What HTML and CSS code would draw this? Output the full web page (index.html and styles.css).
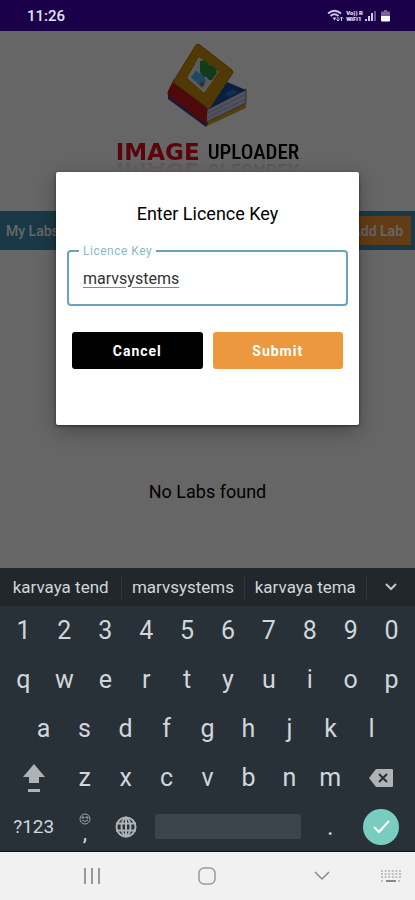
FILE: index.html
```html
<!DOCTYPE html>
<html lang="en">

<head>
    <meta charset="UTF-8">
    <meta name="viewport" content="width=device-width, initial-scale=1">
    <title>Image Uploader</title>
    <link rel="stylesheet" href="styles.css">
</head>

<body>
    <div class="phone">
        <header class="status-bar">
            <span class="clock">11:26</span>
            <div class="status-icons">
                <svg width="17" height="14" viewBox="0 0 17 14">
                    <path d="M1 4.500Q7.500-1 14 4.500M3.500 7Q7.500 3.500 11.500 7" fill="none" stroke="#cfc8e6" stroke-width="1.800" />
                    <path d="M5.500 8.500h4l-2 3z" fill="#cfc8e6" />
                    <path d="M11 8v4M9.500 10.500l1.500 1.500 1.500-1.500M14.500 12V8M13 9.500L14.500 8 16 9.500" fill="none" stroke="#cfc8e6" />
                </svg>
                <span class="volte"><span>Vo)) R</span><span>WiFi1</span></span>
                <svg width="12" height="14" viewBox="0 0 12 14">
                    <path d="M1 12v-2M4 12V7M7 12V4" stroke="#cfc8e6" stroke-width="2" />
                    <path d="M10 12V2" stroke="#67578f" stroke-width="2" />
                </svg>
                <svg class="battery" width="9" height="14" viewBox="0 0 9 14">
                    <path d="M3 1h3v1.500h3V8H0V2.500h3z" fill="#75679c" />
                    <path d="M0 7h9v4.500q0 1-1 1H1q-1 0-1-1z" fill="#fff" />
                </svg>
            </div>
        </header>

        <main class="app">
            <div class="brand">
                <svg class="brand-icon" viewBox="0 0 84 86">
                    <path d="M3 50L41 83 80 65V58L42 71z" fill="#c9a51a" />
                    <path d="M2 49v7l38 28 2-4z" fill="#2f3f9a" />
                    <path d="M40 67L80 46v14L41 79z" fill="#c8cbe8" stroke="#778" />
                    <path d="M40 71L80 51M40 75L80 56" stroke="#a6a9cc" />
                    <path d="M43 66L61 39 80 47z" fill="#144fa8" />
                    <path d="M59 51l8-5 5 3-8 5z" fill="#3070c8" />
                    <path d="M8 36L42 62l-2 20L5 55q-5-3-3-7z" fill="#c41a1a" />
                    <path d="M30 2q2-2 4 0l32 25q2 2 0 4L43 66 7 39z" fill="#c98f12" stroke="#a87500" />
                    <path d="M33 15l19 14-14 20-16-14z" fill="#d5e8f0" stroke="#fff" />
                    <path d="M34 18q6-2 9 4 8 1 8 8l-5 7q-4 1-5-3-6 0-7-6z" fill="#2f9440" />
                    <path d="M25 34l5-6 8 5 2 6-4 6z" fill="#4cb6f5" />
                    <circle cx="36" cy="41" r="2" fill="#f04030" />
                </svg>
                <h1 class="brand-name"><span class="brand-red">IMAGE</span> <span class="brand-black">UPLOADER</span></h1>
            </div>

            <div class="toolbar">
                <span>My Labs</span>
                <button class="add-lab" type="button">Add Lab</button>
            </div>

            <p class="empty">No Labs found</p>

            <!-- Licence dialog -->
            <div class="scrim">
                <form class="dialog" role="dialog" aria-labelledby="dialog-title">
                    <h2 class="dialog-title" id="dialog-title">Enter Licence Key</h2>
                    <fieldset class="field">
                        <legend><label for="licence">Licence Key</label></legend>
                        <input id="licence" type="text" value="marvsystems" spellcheck="false">
                    </fieldset>
                    <div class="actions">
                        <button class="btn btn-cancel" type="button">Cancel</button>
                        <button class="btn btn-submit" type="button">Submit</button>
                    </div>
                </form>
            </div>
        </main>

        <section class="keyboard">
            <div class="suggestions">
                <button type="button">karvaya tend</button>
                <button type="button">marvsystems</button>
                <button type="button">karvaya tema</button>
                <button class="more" type="button" aria-label="More">
                    <svg width="14" height="10" viewBox="0 0 14 10"><path d="M2 2l5 5 5-5" fill="none" stroke="#c3c7c9" stroke-width="2" /></svg>
                </button>
            </div>
            <div class="keys">
                <button type="button">1</button>
                <button type="button">2</button>
                <button type="button">3</button>
                <button type="button">4</button>
                <button type="button">5</button>
                <button type="button">6</button>
                <button type="button">7</button>
                <button type="button">8</button>
                <button type="button">9</button>
                <button type="button">0</button>
            </div>
            <div class="keys">
                <button type="button">q</button>
                <button type="button">w</button>
                <button type="button">e</button>
                <button type="button">r</button>
                <button type="button">t</button>
                <button type="button">y</button>
                <button type="button">u</button>
                <button type="button">i</button>
                <button type="button">o</button>
                <button type="button">p</button>
            </div>
            <div class="keys keys-inset">
                <button type="button">a</button>
                <button type="button">s</button>
                <button type="button">d</button>
                <button type="button">f</button>
                <button type="button">g</button>
                <button type="button">h</button>
                <button type="button">j</button>
                <button type="button">k</button>
                <button type="button">l</button>
            </div>
            <div class="keys">
                <button class="key-wide" type="button" aria-label="Shift">
                    <svg width="24" height="30" viewBox="0 0 24 30"><path d="M12 1l11 13h-6v6H7v-6H1zM6 26h12v3H6z" fill="#adb3b7" /></svg>
                </button>
                <button type="button">z</button>
                <button type="button">x</button>
                <button type="button">c</button>
                <button type="button">v</button>
                <button type="button">b</button>
                <button type="button">n</button>
                <button type="button">m</button>
                <button class="key-wide" type="button" aria-label="Delete">
                    <svg width="26" height="20" viewBox="0 0 26 20">
                        <path d="M8 1h16q1 0 1 1v16q0 1-1 1H8L1 10z" fill="#adb3b7" />
                        <path d="M11 6l8 8M19 6l-8 8" stroke="#283138" stroke-width="2" />
                    </svg>
                </button>
            </div>
            <div class="keys">
                <button class="key-wide key-mode" type="button">?123</button>
                <button class="key-comma" type="button" aria-label="Comma">
                    <svg width="12" height="12" viewBox="0 0 12 12">
                        <circle cx="6" cy="6" r="5" fill="none" stroke="#9ca3a8" />
                        <path d="M3 4h2v1H3zM7 4h2v1H7zM3 7q3 3 6 0" fill="none" stroke="#9ca3a8" />
                    </svg>
                    <span>,</span>
                </button>
                <button type="button" aria-label="Language">
                    <svg width="22" height="22" viewBox="0 0 22 22">
                        <circle cx="11" cy="11" r="9.500" fill="none" stroke="#adb3b7" stroke-width="2" />
                        <path d="M1 7.500h20M1 14.500h20M11 1v20M11 1C5 6 5 16 11 21M11 1c6 5 6 15 0 20" fill="none" stroke="#adb3b7" stroke-width="2" />
                    </svg>
                </button>
                <button class="key-space" type="button" aria-label="Space"><span></span></button>
                <button type="button">.</button>
                <button class="key-wide" type="button" aria-label="Done">
                    <svg class="done" width="36" height="36" viewBox="0 0 36 36">
                        <circle cx="18" cy="18" r="18" fill="#7accc0" />
                        <path d="M11 18l5 5 10-11" fill="none" stroke="#fff" stroke-width="2" />
                    </svg>
                </button>
            </div>
        </section>

        <nav class="nav-bar">
            <button type="button" aria-label="Recents">
                <svg width="18" height="16" viewBox="0 0 18 16"><path d="M2 0v16M9 0v16M16 0v16" stroke="#999" stroke-width="2" /></svg>
            </button>
            <button type="button" aria-label="Home">
                <svg width="18" height="18" viewBox="0 0 18 18"><rect x="1" y="1" width="16" height="16" rx="5" fill="none" stroke="#999" stroke-width="1.500" /></svg>
            </button>
            <button type="button" aria-label="Back">
                <svg width="16" height="10" viewBox="0 0 16 10"><path d="M1 1l7 7 7-7" fill="none" stroke="#888" stroke-width="1.500" /></svg>
            </button>
            <button class="nav-keyboard" type="button" aria-label="Keyboard">
                <svg width="20" height="14" viewBox="0 0 20 14">
                    <path d="M0 2h20M0 5h20M0 8h20M0 12h3M17 12h3" stroke="#b0b0b0" stroke-width="1.500" stroke-dasharray="2 1.600" />
                    <path d="M5 12h10" stroke="#888" stroke-width="2" />
                </svg>
            </button>
        </nav>
    </div>
</body>

</html>
```

FILE: styles.css
```css
* {
    box-sizing: border-box;
}

body {
    margin: 0;
    font-family: Roboto, sans-serif;
    color: #000;
}

button {
    padding: 0;
    border: none;
    background: none;
    font: inherit;
    color: inherit;
}

svg {
    display: block;
}

.phone {
    display: flex;
    flex-direction: column;
    min-height: 100vh;
}

/* Status bar */
.status-bar {
    display: flex;
    justify-content: space-between;
    align-items: center;
    height: 31px;
    padding: 0 25px 0 27px;
    background: #1a0049;
    color: #e6e1f2;
}

.clock {
    font-size: 15px;
    font-weight: 500;
}

.status-icons {
    display: flex;
    align-items: center;
    gap: 2px;
}

.volte {
    display: flex;
    flex-direction: column;
    font-size: 6px;
    line-height: 6px;
    font-weight: 900;
}

.battery {
    margin-left: 2px;
}

/* App behind the dialog */
.app {
    position: relative;
    flex: 1;
    display: flex;
    flex-direction: column;
    background: #fff;
}

.brand {
    display: flex;
    flex-direction: column;
    align-items: center;
    height: 180px;
    padding-top: 12px;
}

.brand-icon {
    width: 84px;
    height: 86px;
}

.brand-name {
    display: flex;
    align-items: center;
    gap: 8px;
    margin: 5px 0 0;
    line-height: 36px;
    -webkit-box-reflect: below -17px linear-gradient(transparent 50%, rgba(0, 0, 0, 0.4));
}

.brand-red {
    font-family: "DejaVu Sans", sans-serif;
    font-size: 23px;
    font-weight: 700;
    color: #e00c1c;
}

.brand-black {
    font-family: "Roboto Condensed", "Liberation Sans Narrow", Roboto, sans-serif;
    font-size: 21px;
    font-weight: 500;
}

.toolbar {
    display: flex;
    justify-content: space-between;
    align-items: center;
    height: 39px;
    padding: 0 4px 0 6px;
    background: #418fae;
    color: #fff;
    font-size: 14px;
    font-weight: 500;
}

.add-lab {
    height: 29px;
    padding: 0 8px;
    background: #f39a3b;
}

.empty {
    flex: 1;
    display: flex;
    justify-content: center;
    align-items: center;
    margin: 0;
    padding-top: 164px;
    font-size: 18px;
}

/* Licence dialog */
.scrim {
    position: absolute;
    inset: 0;
    display: flex;
    justify-content: center;
    align-items: center;
    padding-bottom: 2px;
    background: rgba(0, 0, 0, 0.6);
}

.dialog {
    width: 73%;
    padding: 30px 11px 56px;
    border-radius: 2px;
    background: #fff;
    box-shadow: 0 6px 20px rgba(0, 0, 0, 0.3), 0 1px 3px rgba(0, 0, 0, 0.5);
}

.dialog-title {
    margin: 0 0 18px;
    font-size: 18px;
    font-weight: 400;
    line-height: 24px;
    text-align: center;
}

.field {
    min-width: 0;
    margin: 0;
    padding: 0 14px;
    border: 2px solid #68a5bd;
    border-radius: 4px;
}

.field legend {
    margin-left: -4px;
    padding: 0 4px;
    color: #8ab8cb;
    font-size: 12px;
    line-height: 14px;
    letter-spacing: 0.5px;
}

.field input {
    display: block;
    width: 100%;
    height: 46px;
    padding: 0 0 6px;
    border: none;
    outline: none;
    background: none;
    color: #333;
    font: 16px Roboto, sans-serif;
    text-decoration: underline #888;
    text-underline-offset: 3px;
}

.actions {
    display: flex;
    gap: 10px;
    padding: 26px 5px 0;
}

.btn {
    flex: 1;
    height: 37px;
    border-radius: 3px;
    color: #fff;
    font-size: 14px;
    font-weight: 700;
    letter-spacing: 1px;
}

.btn-cancel {
    background: #000;
}

.btn-submit {
    background: #eb983f;
}

/* Keyboard */
.keyboard {
    border-bottom: 1px solid #0c1118;
    background: #283138;
    color: #d0d6da;
}

.suggestions {
    display: flex;
    align-items: center;
    height: 38px;
    background: #21272b;
    font-size: 17px;
}

.suggestions button {
    flex: 1;
    height: 24px;
    border-right: 1px solid #30373b;
}

.suggestions .more {
    display: flex;
    flex: 0 0 48px;
    justify-content: center;
    align-items: center;
    border: none;
}

.keys {
    display: flex;
    height: 49px;
    padding: 0 3px;
    font-size: 25px;
}

.keys-inset {
    padding: 0 23px;
}

.keys button {
    display: flex;
    flex: 2;
    justify-content: center;
    align-items: center;
}

.keys .key-wide {
    flex: 3;
}

.keys .key-mode {
    font-size: 19px;
}

.keys .key-comma {
    flex-direction: column;
}

.key-comma span {
    font-size: 22px;
    line-height: 16px;
}

.keys .key-space {
    flex: 8;
}

.key-space span {
    flex: 1;
    height: 25px;
    margin: 0 9px;
    border-radius: 2px;
    background: #3c454c;
}

/* System navigation */
.nav-bar {
    display: flex;
    align-items: center;
    height: 48px;
    padding: 0 12px 0 34px;
    background: #f1f1f1;
}

.nav-bar button {
    display: flex;
    flex: 1;
    justify-content: center;
}

.nav-bar .nav-keyboard {
    flex: 0 0 24px;
}
```
